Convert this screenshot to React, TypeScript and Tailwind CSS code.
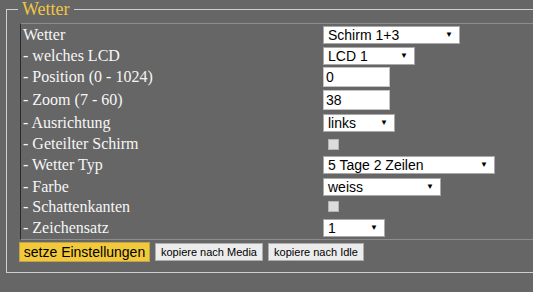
import React from 'react';

const serif = "font-['Liberation_Serif','Times_New_Roman',serif]";
const sans = "font-['Liberation_Sans',Arial,sans-serif]";

const Select = ({ value, width }: { value: string; width: string }) => (
  <div
    className={`${width} h-[18px] bg-white border border-[#a9a9a9] flex items-center justify-between pl-[4px] pr-[6px] text-[14px] leading-none text-black ${sans}`}
  >
    <span>{value}</span>
    <span className="text-[8px]">▼</span>
  </div>
);

const Input = ({ value }: { value: string }) => (
  <div
    className={`w-[67px] h-[20px] bg-white border border-[#c4c4c4] flex items-center pl-[2px] text-[14px] leading-none text-black ${sans}`}
  >
    {value}
  </div>
);

const Check = () => (
  <div className="ml-[5px] w-[11px] h-[11px] bg-[#dcdcdc] border border-[#b5b5b5]" />
);

const rows: { label: string; h: string; control: React.ReactNode }[] = [
  { label: 'Wetter', h: 'h-[21px]', control: <Select value="Schirm 1+3" width="w-[137px]" /> },
  { label: '- welches LCD', h: 'h-[21px]', control: <Select value="LCD 1" width="w-[92px]" /> },
  { label: '- Position (0 - 1024)', h: 'h-[22px]', control: <Input value="0" /> },
  { label: '- Zoom (7 - 60)', h: 'h-[23px]', control: <Input value="38" /> },
  { label: '- Ausrichtung', h: 'h-[23px]', control: <Select value="links" width="w-[72px]" /> },
  { label: '- Geteilter Schirm', h: 'h-[20px]', control: <Check /> },
  { label: '- Wetter Typ', h: 'h-[22px]', control: <Select value="5 Tage 2 Zeilen" width="w-[172px]" /> },
  { label: '- Farbe', h: 'h-[21px]', control: <Select value="weiss" width="w-[118px]" /> },
  { label: '- Schattenkanten', h: 'h-[19px]', control: <Check /> },
  { label: '- Zeichensatz', h: 'h-[23px]', control: <Select value="1" width="w-[62px]" /> },
];

export default function App() {
  return (
    <div className="w-[533px] h-[292px] bg-[#666666] overflow-hidden">
      <fieldset className="ml-[6px] w-[560px] border border-[#cfcfcf] pl-[13px] pb-[10px]">
        <legend className="-ml-[2px] px-[4px] leading-[18px]">
          <span className={`text-[18px] text-[#f0c545] ${serif}`}>Wetter</span>
        </legend>
        <div className="mt-[5px] border-t border-t-[#8c8c8c] border-b border-b-[#8c8c8c] border-l border-l-[#2a2a2a]">
          {rows.map((r) => (
            <div key={r.label} className={`flex items-center ${r.h}`}>
              <div className={`w-[302px] pl-[2px] text-[16px] leading-none text-[#f6f6f6] ${serif}`}>
                {r.label}
              </div>
              <div className="flex items-center">{r.control}</div>
            </div>
          ))}
        </div>
        <div className={`flex items-center gap-[5px] mt-[2px] -ml-[1px] ${sans}`}>
          <div className="h-[20px] w-[131px] flex items-center justify-center bg-[#f3c93c] border border-[#bfa24a] text-[14px] text-black">
            setze Einstellungen
          </div>
          <div className="h-[18px] w-[108px] flex items-center justify-center bg-[#ececec] border border-[#adadad] text-[11px] text-black">
            kopiere nach Media
          </div>
          <div className="h-[18px] w-[96px] flex items-center justify-center bg-[#ececec] border border-[#adadad] text-[11px] text-black">
            kopiere nach Idle
          </div>
        </div>
      </fieldset>
    </div>
  );
}
